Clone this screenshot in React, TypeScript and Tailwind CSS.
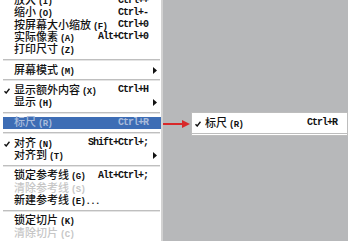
type MenuItem =
  | { kind: "sep" }
  | {
      kind: "item";
      label: string;
      key: string;
      shortcut?: string;
      checked?: boolean;
      submenu?: boolean;
      disabled?: boolean;
      active?: boolean;
      suffix?: string;
    };

const ITEMS: MenuItem[] = [
  { kind: "item", label: "放大", key: "(I)", shortcut: "Ctrl++" },
  { kind: "item", label: "缩小", key: "(O)", shortcut: "Ctrl+-" },
  { kind: "item", label: "按屏幕大小缩放", key: "(F)", shortcut: "Ctrl+0" },
  { kind: "item", label: "实际像素", key: "(A)", shortcut: "Alt+Ctrl+0" },
  { kind: "item", label: "打印尺寸", key: "(Z)" },
  { kind: "sep" },
  { kind: "item", label: "屏幕模式", key: "(M)", submenu: true },
  { kind: "sep" },
  { kind: "item", label: "显示额外内容", key: "(X)", shortcut: "Ctrl+H", checked: true },
  { kind: "item", label: "显示", key: "(H)", submenu: true },
  { kind: "sep" },
  { kind: "item", label: "标尺", key: "(R)", shortcut: "Ctrl+R", active: true },
  { kind: "sep" },
  { kind: "item", label: "对齐", key: "(N)", shortcut: "Shift+Ctrl+;", checked: true },
  { kind: "item", label: "对齐到", key: "(T)", submenu: true },
  { kind: "sep" },
  { kind: "item", label: "锁定参考线", key: "(G)", shortcut: "Alt+Ctrl+;" },
  { kind: "item", label: "清除参考线", key: "(S)", disabled: true },
  { kind: "item", label: "新建参考线", key: "(E)", suffix: "..." },
  { kind: "sep" },
  { kind: "item", label: "锁定切片", key: "(K)" },
  { kind: "item", label: "清除切片", key: "(C)", disabled: true },
];

const CJK = "[font-family:'Noto_Sans_CJK_SC',sans-serif]";
const MONO = "[font-family:'Liberation_Mono',monospace]";

function Check() {
  return (
    <svg width="6" height="6" viewBox="0 0 6 6" aria-hidden="true">
      <path d="M0.5 3.2 L2.2 5 L5.5 0.8" fill="none" stroke="currentColor" strokeWidth="1.4" />
    </svg>
  );
}

function SubArrow() {
  return (
    <svg width="4" height="7" viewBox="0 0 4 7" aria-hidden="true">
      <path d="M0 0 L4 3.5 L0 7 Z" fill="#111" />
    </svg>
  );
}

function Label({ text, accel }: { text: string; accel: string }) {
  return (
    <span className={`flex-1 whitespace-nowrap text-[11px] leading-none font-medium ${CJK}`}>
      {text}
      <span className={`ml-[2px] text-[9px] font-bold tracking-[-0.6px] ${MONO}`}>{accel}</span>
    </span>
  );
}

function Row({ item }: { item: Extract<MenuItem, { kind: "item" }> }) {
  const color = item.active
    ? "bg-[#3d6db5] text-[#a9bcdc]"
    : item.disabled
      ? "text-[#c6c6c6]"
      : "text-[#111]";

  return (
    <div className={`flex h-[12.3px] items-center ${color}`}>
      <span className="flex w-[11px] items-center pl-[1px] pt-[1px]">
        {item.checked && <Check />}
      </span>
      <Label text={item.label} accel={item.key + (item.suffix ?? "")} />
      {item.shortcut && (
        <span className={`whitespace-nowrap text-[10px] leading-none font-bold tracking-[-1px] ${MONO}`}>
          {item.shortcut}
        </span>
      )}
      <span className="flex w-[13px] items-center pl-[5px]">
        {item.submenu && <SubArrow />}
      </span>
    </div>
  );
}

export default function App() {
  return (
    <div className="flex h-[241px] w-[348px] overflow-hidden bg-[#b7b8ba]">
      {/* View menu */}
      <div className="w-[163px] flex-none border-r-2 border-[#d2d2d2] bg-white">
        <div className="mt-[-5.6px] pl-[3px]">
          {ITEMS.map((item, i) =>
            item.kind === "sep" ? (
              <div key={i} className="h-[8px] pr-[1px] pt-[3px]">
                <div className="h-[2px] border-t border-[#bfbfbf] bg-[#e4e4e4]" />
              </div>
            ) : (
              <Row key={i} item={item} />
            ),
          )}
        </div>
      </div>

      {/* Callout: arrow + ruler submenu */}
      <div className="flex-1 pt-[112px]">
        <div className="flex items-center">
          <svg width="28" height="10" viewBox="0 0 28 10" aria-hidden="true" className="flex-none">
            <path d="M0 5 H21" stroke="#d8282a" strokeWidth="2" />
            <path d="M19 1 L27 5 L19 9 Z" fill="#d8282a" />
          </svg>
          <div className="flex h-[24px] flex-1 items-center border border-b-[3px] border-double border-[#bdbdbd] bg-white text-[#111]">
            <span className="flex w-[13px] items-center pl-[3px] pt-[1px]">
              <Check />
            </span>
            <Label text="标尺" accel="(R)" />
            <span className={`whitespace-nowrap pr-[10px] text-[10px] leading-none font-bold tracking-[-1px] ${MONO}`}>
              Ctrl+R
            </span>
          </div>
        </div>
      </div>
    </div>
  );
}
